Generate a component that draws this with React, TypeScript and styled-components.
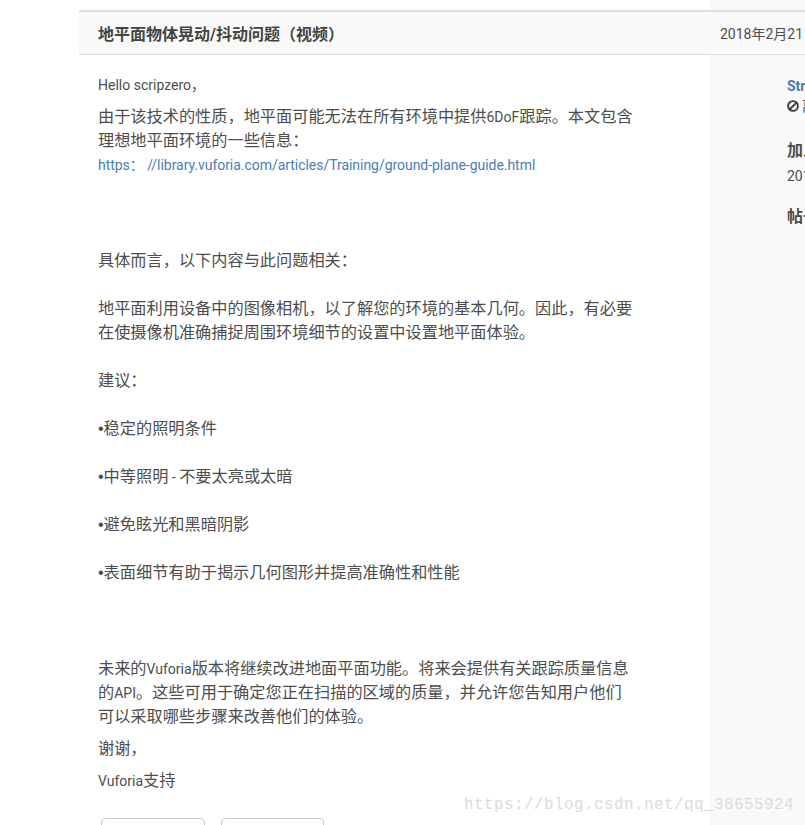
import React from "react";
import styled, { createGlobalStyle } from "styled-components";

const GlobalStyle = createGlobalStyle`
  html, body {
    margin: 0;
    background: #fff;
    overflow: hidden;
  }
  body {
    font-family: "Roboto", "Noto Sans CJK SC", sans-serif;
    color: #4d4d4d;
  }
`;

const Page = styled.div`
  position: relative;
  width: 805px;
  height: 825px;
  overflow: hidden;
`;

const Post = styled.div`
  display: grid;
  grid-template-columns: 630px 300px;
  grid-template-rows: 10px 45px 1fr;
  margin-left: 79px;
  height: 825px;
`;

const TopGap = styled.div`
  grid-column: 2;
  grid-row: 1;
  background: #f9f9f9;
`;

const PostHeader = styled.header`
  grid-column: 1 / span 2;
  grid-row: 2;
  display: flex;
  align-items: center;
  box-sizing: border-box;
  padding-left: 19px;
  background: #f9f9f9;
  border-top: 2px solid #dedede;
  border-bottom: 1px solid #dedede;
`;

const Title = styled.h1`
  flex: 0 0 622px;
  margin: 0;
  font-size: 16px;
  font-weight: 700;
  color: #444;
`;

const PostDate = styled.span`
  font-size: 14px;
  white-space: nowrap;
`;

const Content = styled.main`
  grid-column: 1;
  grid-row: 3;
  box-sizing: border-box;
  padding: 18px 75px 0 19px;
`;

const Para = styled.p<{ $small?: boolean; $gap?: number }>`
  margin: 0 0 ${(p) => p.$gap ?? 8}px;
  font-size: ${(p) => (p.$small ? 14 : 16.2)}px;
  line-height: 24px;
`;

// latin runs sit smaller than the chinese around them
const Latin = styled.span`
  font-size: 14px;
`;

const Bullet = styled.span`
  font-family: "Liberation Sans", sans-serif;
  font-size: 16px;
`;

const Link = styled.a`
  font-size: 14px;
  letter-spacing: -0.04px;
  color: #4a7db5;
  text-decoration: none;
`;

const Actions = styled.div`
  display: flex;
  gap: 16px;
  margin: 25px 0 0 3px;
`;

const ActionButton = styled.button<{ $width: number }>`
  width: ${(p) => p.$width}px;
  height: 34px;
  padding: 0;
  background: #fff;
  border: 1px solid #c8c8c8;
  border-radius: 4px;
`;

const Side = styled.aside`
  grid-column: 2;
  grid-row: 3;
  box-sizing: border-box;
  padding: 21px 0 0 78px;
  background: #f9f9f9;
  white-space: nowrap;
`;

const Author = styled.a`
  display: block;
  font-size: 14px;
  line-height: 20px;
  font-weight: 700;
  color: #4a7ab5;
`;

const Status = styled.div`
  display: flex;
  align-items: center;
  gap: 3px;
  font-size: 14px;
  line-height: 20px;
  margin-bottom: 23px;
`;

const SideLabel = styled.div`
  font-size: 16px;
  line-height: 24px;
  font-weight: 700;
`;

const SideValue = styled.div`
  font-size: 14px;
  line-height: 20px;
  margin: 3px 0 19px;
`;

const Watermark = styled.span`
  position: absolute;
  left: 464px;
  top: 795px;
  font-family: "Liberation Mono", monospace;
  font-size: 16px;
  letter-spacing: 0.4px;
  line-height: 20px;
  color: #dcdcd6;
  white-space: nowrap;
`;

const BanIcon = () => (
  <svg width="12" height="12" viewBox="0 0 12 12" fill="none" stroke="#3a3a3a" strokeWidth="1.9">
    <circle cx="6" cy="6" r="4.9" />
    <line x1="2.6" y1="9.4" x2="9.4" y2="2.6" />
  </svg>
);

export default function App() {
  return (
    <Page>
      <GlobalStyle />
      <Post>
        <TopGap />
        <PostHeader>
          <Title>地平面物体晃动/抖动问题（视频）</Title>
          <PostDate>2018年2月21日</PostDate>
        </PostHeader>
        <Content>
          <Para $small>Hello scripzero，</Para>
          <Para $gap={72}>
            由于该技术的性质，地平面可能无法在所有环境中提供<Latin>6DoF</Latin>跟踪。本文包含理想地平面环境的一些信息：
            <br />
            <Link href="#">https： //library.vuforia.com/articles/Training/ground-plane-guide.html</Link>
          </Para>
          <Para $gap={24}>具体而言，以下内容与此问题相关：</Para>
          <Para $gap={24}>
            地平面利用设备中的图像相机，以了解您的环境的基本几何。因此，有必要在使摄像机准确捕捉周围环境细节的设置中设置地平面体验。
          </Para>
          <Para $gap={24}>建议：</Para>
          <Para $gap={24}><Bullet>•</Bullet>稳定的照明条件</Para>
          <Para $gap={24}><Bullet>•</Bullet>中等照明<Latin> - </Latin>不要太亮或太暗</Para>
          <Para $gap={24}><Bullet>•</Bullet>避免眩光和黑暗阴影</Para>
          <Para $gap={72}><Bullet>•</Bullet>表面细节有助于揭示几何图形并提高准确性和性能</Para>
          <Para>
            未来的<Latin>Vuforia</Latin>版本将继续改进地面平面功能。将来会提供有关跟踪质量信息的<Latin>API</Latin>。这些可用于确定您正在扫描的区域的质量，并允许您告知用户他们可以采取哪些步骤来改善他们的体验。
          </Para>
          <Para>谢谢，</Para>
          <Para><Latin>Vuforia</Latin>支持</Para>
          <Actions>
            <ActionButton $width={104} />
            <ActionButton $width={103} />
          </Actions>
        </Content>
        <Side>
          <Author>Strategic</Author>
          <Status>
            <BanIcon />
            离线
          </Status>
          <SideLabel>加入日期</SideLabel>
          <SideValue>2017年</SideValue>
          <SideLabel>帖子</SideLabel>
        </Side>
      </Post>
      <Watermark>https://blog.csdn.net/qq_38655924</Watermark>
    </Page>
  );
}
